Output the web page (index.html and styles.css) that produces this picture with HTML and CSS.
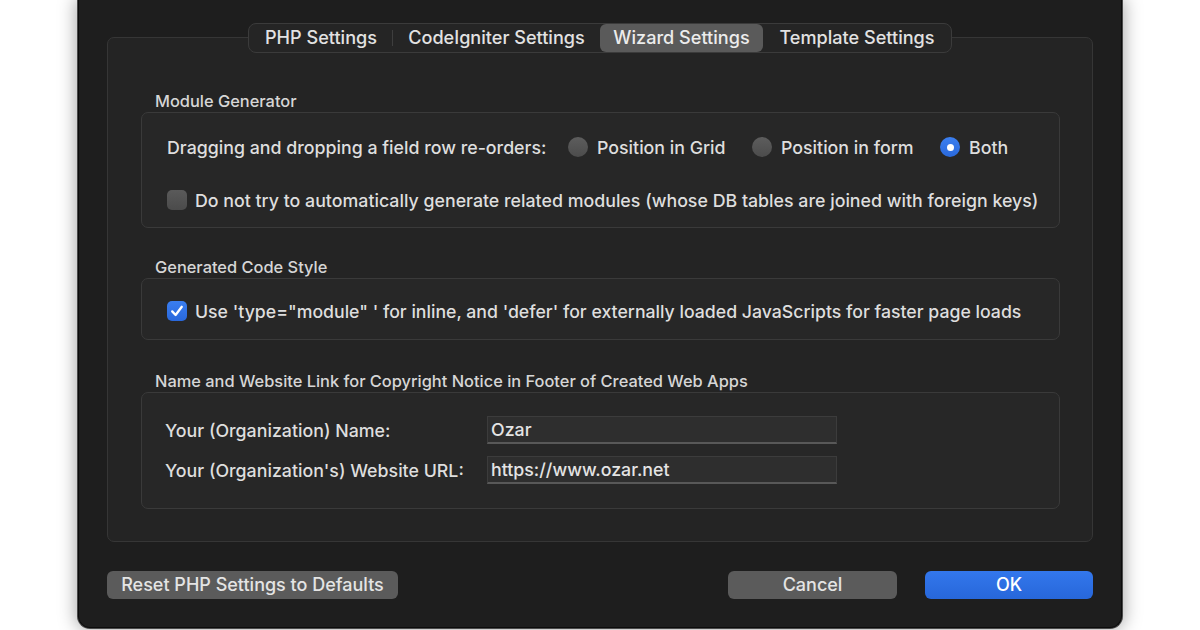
FILE: index.html
```html
<!DOCTYPE html>
<html>
<head>
<meta charset="utf-8">
<link rel="stylesheet" href="styles.css">
</head>
<body>
<div class="window">
  <div class="tabs-wrap">
    <div class="tabs">
      <div class="tab t-php">PHP Settings</div>
      <div class="tab t-ci">CodeIgniter Settings</div>
      <div class="tab t-wiz selected">Wizard Settings</div>
      <div class="tab t-tpl">Template Settings</div>
    </div>
  </div>
  <div class="panel">
    <div class="group-label">Module Generator</div>
    <div class="group g-module">
      <div class="row row-radios">
        <span class="drag-label">Dragging and dropping a field row re-orders:</span>
        <span class="opt opt-grid"><span class="radio"></span>Position in Grid</span>
        <span class="opt opt-form"><span class="radio"></span>Position in form</span>
        <span class="opt opt-both"><span class="radio on"></span>Both</span>
      </div>
      <div class="row row-check second">
        <span class="checkbox"></span>Do not try to automatically generate related modules (whose DB tables are joined with foreign keys)
      </div>
    </div>

    <div class="group-label gl-code">Generated Code Style</div>
    <div class="group g-code">
      <div class="row row-check">
        <span class="checkbox on"><svg viewBox="0 0 20 20" width="20" height="20"><path d="M5.2 10.4 L8.6 14 L14.8 5.8" fill="none" stroke="#fff" stroke-width="2.3" stroke-linecap="round" stroke-linejoin="round"/></svg></span><span class="code-text">Use 'type="module" ' for inline, and 'defer' for externally loaded JavaScripts for faster page loads</span>
      </div>
    </div>

    <div class="group-label gl-name">Name and Website Link for Copyright Notice in Footer of Created Web Apps</div>
    <div class="group g-name">
      <div class="field-row">
        <span class="field-label">Your (Organization) Name:</span>
        <span class="input">Ozar</span>
      </div>
      <div class="field-row second-field">
        <span class="field-label">Your (Organization's) Website URL:</span>
        <span class="input">https://www.ozar.net</span>
      </div>
    </div>
  </div>
  <div class="footer">
    <div class="btn btn-reset">Reset PHP Settings to Defaults</div>
    <div class="footer-right">
      <div class="btn btn-cancel">Cancel</div>
      <div class="btn btn-ok">OK</div>
    </div>
  </div>
</div>
</body>
</html>
```

FILE: styles.css
```css
* { box-sizing: border-box; }
html, body { margin: 0; padding: 0; }
body {
  background: #ffffff;
  width: 1200px;
  height: 630px;
  overflow: hidden;
  font-family: "Inter", "Liberation Sans", sans-serif;
  color: #dedede;
}
.window {
  margin-left: 78px;
  width: 1044px;
  height: 628px;
  background: #1e1e1e;
  border: 1px solid #0c0c0c;
  border-top: none;
  border-radius: 0 0 12px 12px;
  box-shadow: 0 0 0 1px #4a4a4a, 0 0 18px 2px rgba(0,0,0,0.35);
  padding: 23px 28px 0 28px;
}
.tabs-wrap {
  display: flex;
  justify-content: center;
  position: relative;
  z-index: 1;
}
.tabs {
  display: flex;
  width: 704px;
  height: 30px;
  border: 1px solid #3b3b3b;
  border-radius: 8px;
  background: #252525;
  padding: 0;
}
.tab {
  display: flex;
  align-items: center;
  justify-content: center;
  font-size: 18.1px;
  font-weight: 500;
  color: #e2e2e2;
  height: 28px;
  padding-bottom: 3px;
  position: relative;
}
.t-php { width: 144px; }
.t-php::after {
  content: "";
  position: absolute;
  right: 0;
  top: 6px;
  width: 1px;
  height: 16px;
  background: #3e3e3e;
}
.t-ci { width: 207px; }
.t-wiz { width: 163px; }
.t-tpl { width: 188px; }
.tab.selected {
  background: #5a5a5a;
  border-radius: 6px;
  color: #ececec;
}
.panel {
  margin-top: -16px;
  width: 986px;
  background: #242424;
  border: 1px solid #363636;
  border-radius: 7px;
  padding: 52px 32px 32px 33px;
}
.group-label {
  height: 22px;
  line-height: 22px;
  font-size: 16.4px;
  font-weight: 500;
  color: #d6d6d6;
  padding-left: 14px;
}
.gl-code { margin-top: 28px; }
.gl-name { margin-top: 30px; }
.group {
  background: #272727;
  border: 1px solid #3a3a3a;
  border-radius: 7px;
}
.g-module { height: 116px; padding: 22px 25px 0 25px; }
.g-code { height: 62px; padding: 20px 25px 0 25px; }
.g-name { height: 117px; padding: 23px 23px 0 23px; }
.row {
  display: flex;
  align-items: center;
  height: 24px;
  font-size: 17.8px;
  font-weight: 500;
  white-space: nowrap;
}
.code-text { font-size: 17.7px; }
.row.second { margin-top: 29px; }
.drag-label { width: 401px; }
.opt { display: flex; align-items: center; }
.opt-grid { width: 184px; }
.opt-form { width: 188px; }
.radio {
  width: 20px;
  height: 20px;
  border-radius: 50%;
  background: linear-gradient(#5d5d5d, #4c4c4c);
  margin-right: 9px;
  flex: none;
  display: flex;
  align-items: center;
  justify-content: center;
}
.radio.on {
  background: linear-gradient(#3b7ff0, #2a69dc);
}
.radio.on::after {
  content: "";
  width: 7px;
  height: 7px;
  border-radius: 50%;
  background: #ffffff;
}
.checkbox {
  width: 20px;
  height: 20px;
  border-radius: 5px;
  background: linear-gradient(#5a5a5a, #4b4b4b);
  margin-right: 8px;
  flex: none;
  display: flex;
}
.checkbox.on {
  background: linear-gradient(#3a7ef0, #2968dc);
}
.field-row {
  display: flex;
  align-items: center;
  height: 28px;
  font-size: 17.8px;
  font-weight: 500;
}
.second-field { margin-top: 12px; }
.field-label { width: 322px; }
.input {
  width: 350px;
  height: 28px;
  background: #2e2e2e;
  border: 1px solid #3c3c3c;
  border-bottom: 2px solid #585858;
  display: flex;
  align-items: center;
  padding-left: 3px;
  color: #e4e4e4;
}
.footer {
  display: flex;
  justify-content: space-between;
  margin-top: 29px;
}
.footer-right { display: flex; gap: 28px; }
.btn {
  height: 28px;
  border-radius: 6px;
  display: flex;
  align-items: center;
  justify-content: center;
  font-size: 18px;
  font-weight: 500;
  color: #e4e4e4;
  background: #5b5b5b;
  padding-bottom: 1px;
}
.btn-reset { width: 291px; }
.btn-cancel { width: 169px; }
.btn-ok {
  width: 168px;
  background: linear-gradient(#3377ec, #2767da);
  color: #ffffff;
}
```
